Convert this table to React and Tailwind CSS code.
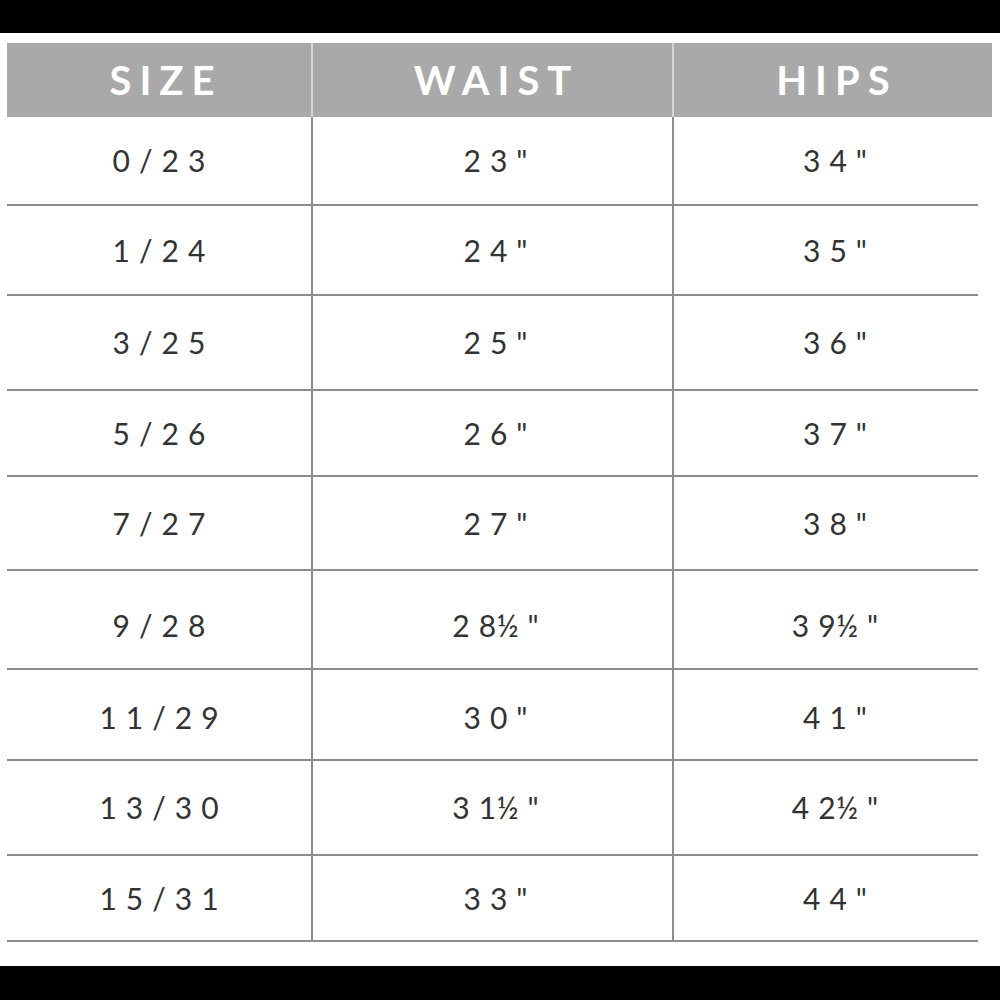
import React from 'react';

const rows = [
  { size: '0/23', waist: '23"', hips: '34"', h: 'h-[89px]' },
  { size: '1/24', waist: '24"', hips: '35"', h: 'h-[90px]' },
  { size: '3/25', waist: '25"', hips: '36"', h: 'h-[95px]' },
  { size: '5/26', waist: '26"', hips: '37"', h: 'h-[86px]' },
  { size: '7/27', waist: '27"', hips: '38"', h: 'h-[94px]' },
  { size: '9/28', waist: '28½"', hips: '39½"', h: 'h-[99px]', pad: 'pt-[12px]' },
  { size: '11/29', waist: '30"', hips: '41"', h: 'h-[91px]', pad: 'pt-[6px]' },
  { size: '13/30', waist: '31½"', hips: '42½"', h: 'h-[95px]' },
  { size: '15/31', waist: '33"', hips: '44"', h: 'h-[86px]' },
];

const cellText = "text-[30px] tracking-[0.3em] pl-[0.3em] text-[#333333] font-['Lato',sans-serif]";
const headText = "text-[40px] font-bold tracking-[0.2em] pl-[0.2em] text-white font-['Lato',sans-serif]";

// pull the "½" glyph in tight against the digit right before it
function Val({ text }) {
  if (!text.includes('½')) return text;
  const [a, b] = text.split('½');
  return (
    <>
      {a.slice(0, -1)}
      <span className="tracking-[0.02em]">{a.slice(-1)}</span>
      <span>½</span>
      {b}
    </>
  );
}

export default function App() {
  return (
    <div className="w-[1000px] h-[1000px] bg-black flex flex-col">
      <div className="h-[33px] shrink-0" />
      <div className="h-[933px] bg-white pt-[10px] pl-[7px]">
        {/* header */}
        <div className="w-[985px] h-[74px] grid grid-cols-[304px_361px_320px] bg-[#a9a9a9]">
          <div className="flex items-center justify-center pl-[6px]">
            <span className={headText}>SIZE</span>
          </div>
          <div className="flex items-center justify-center border-l-2 border-[#d4d4d4]">
            <span className={headText}>WAIST</span>
          </div>
          <div className="flex items-center justify-center border-l-2 border-[#d4d4d4]">
            <span className={headText}>HIPS</span>
          </div>
        </div>
        {/* body */}
        {rows.map((r) => (
          <div key={r.size} className={`w-[971px] grid grid-cols-[304px_361px_306px] border-b-2 border-[#8c8c8c] ${r.h}`}>
            <div className={`flex items-center justify-center ${r.pad || ''}`}>
              <span className={cellText}>{r.size}</span>
            </div>
            <div className={`flex items-center justify-center border-l-2 border-[#8c8c8c] pl-[6px] ${r.pad || ''}`}>
              <span className={cellText}><Val text={r.waist} /></span>
            </div>
            <div className={`flex items-center justify-center border-l-2 border-[#8c8c8c] pl-[18px] ${r.pad || ''}`}>
              <span className={cellText}><Val text={r.hips} /></span>
            </div>
          </div>
        ))}
      </div>
      <div className="flex-1" />
    </div>
  );
}
